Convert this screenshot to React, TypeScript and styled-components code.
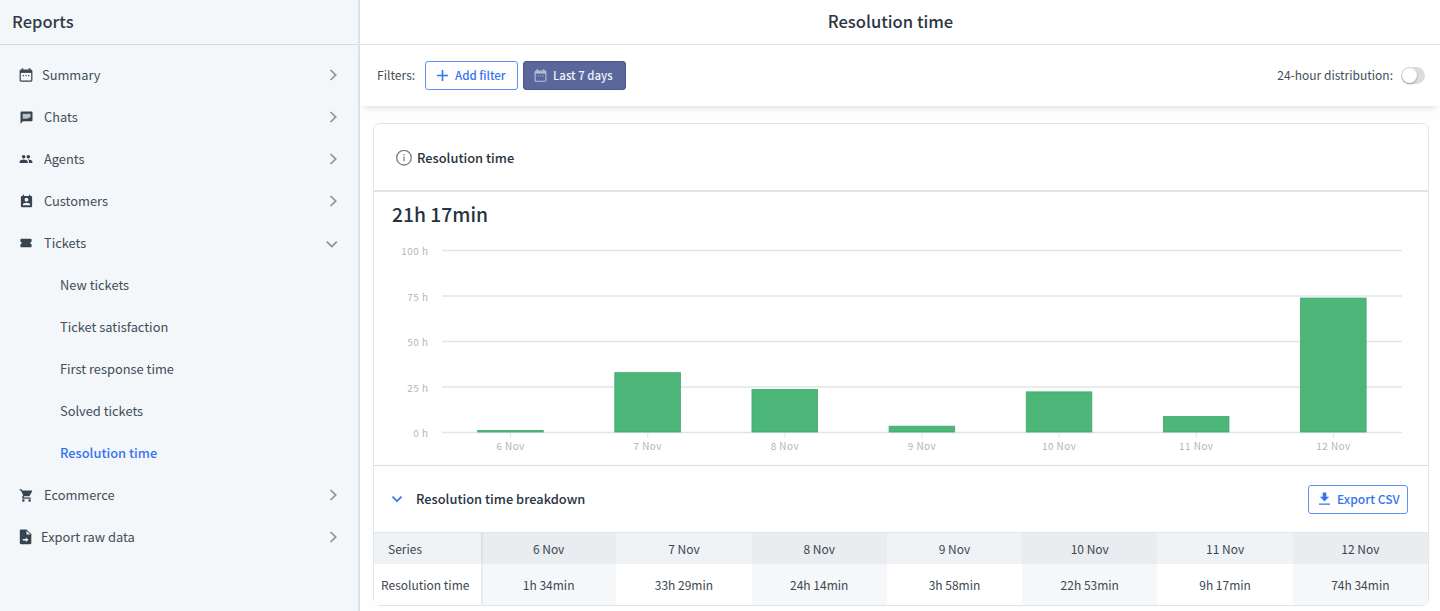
import React from "react";
import styled, { createGlobalStyle, css } from "styled-components";
import { MdPeople, MdPermContactCalendar, MdShoppingCart } from "react-icons/md";

const GlobalStyle = createGlobalStyle`
  *, *::before, *::after { box-sizing: border-box; }
  body {
    margin: 0;
    background: #fefefe;
    color: #424d57;
    font-family: "Noto Sans CJK SC", "Noto Sans", sans-serif;
    font-size: 12.85px;
    line-height: 20px;
  }
`;

const Page = styled.div`
  display: flex;
  height: 611px;
  overflow: hidden;
`;

/* Sidebar */

const Sidebar = styled.aside`
  flex: 0 0 360px;
  height: 611px;
  background: #f3f7fa;
  border-right: 2px solid #dce1e7;
`;

const SidebarHeader = styled.header`
  height: 45px;
  padding: 11px 12px 0;
  border-bottom: 1px solid #d3dae2;
  font-size: 16.5px;
  font-weight: 500;
  color: #2f3b47;
`;

const Menu = styled.nav`
  padding-top: 9px;
`;

const MenuRow = styled.a`
  display: flex;
  align-items: center;
  height: 42px;
  padding: 0 18px 0 17px;
`;

const MenuIcon = styled.span<{ $gap: number }>`
  display: flex;
  justify-content: center;
  width: 18px;
  margin-right: ${(p) => p.$gap}px;
  color: #37434f;
`;

const MenuLabel = styled.span`
  flex: 1;
  padding-bottom: 1px;
`;

const SubRow = styled.a<{ $active?: boolean }>`
  display: flex;
  align-items: center;
  height: 42px;
  padding-left: 60px;
  ${(p) =>
    p.$active &&
    css`
      color: #3574f0;
      font-weight: 500;
    `}
`;

/* Main column */

const Main = styled.main`
  flex: 1;
  min-width: 0;
  height: 611px;
`;

const TitleBar = styled.header`
  height: 45px;
  padding: 11px 19px 0 0;
  border-bottom: 1px solid #e2e6eb;
  background: #fff;
  text-align: center;
  font-size: 16.6px;
  font-weight: 500;
  color: #2a3643;
`;

const FilterBar = styled.div`
  display: flex;
  align-items: center;
  height: 61px;
  padding: 0 15px 1px 17px;
  background: #fff;
  box-shadow: 0 6px 7px -5px rgba(0, 0, 0, 0.16);
`;

const FilterLabel = styled.span`
  width: 48px;
  font-size: 12.1px;
`;

const Button = styled.button<{ $filled?: boolean; $width: number; $size?: number }>`
  display: flex;
  align-items: center;
  height: 29px;
  width: ${(p) => p.$width}px;
  padding: 0 0 0 10px;
  border: 1px solid #5c92fa;
  border-radius: 3px;
  background: #fff;
  color: #3574f0;
  font: 500 ${(p) => p.$size ?? 11.5}px/20px "Noto Sans CJK SC", sans-serif;
  white-space: nowrap;
  svg { flex: none; margin-right: 6px; }
  ${(p) =>
    p.$filled &&
    css`
      margin-left: 5px;
      border-color: #4a568f;
      background: #5a679d;
      color: #f1f3fa;
      svg { color: #b9bfd8; }
    `}
`;

const Distribution = styled.div`
  display: flex;
  align-items: center;
  gap: 8px;
  margin-left: auto;
  font-size: 12px;
`;

const Toggle = styled.span`
  display: flex;
  width: 24px;
  height: 17px;
  padding: 1px;
  border-radius: 9px;
  background: #dcdddf;
`;

const Knob = styled.span`
  width: 15px;
  height: 15px;
  border-radius: 50%;
  background: #fff;
  box-shadow: 0 1px 2px rgba(0, 0, 0, 0.35);
`;

const Card = styled.section`
  width: 1056px;
  height: 483px;
  margin: 17px 0 0 13px;
  border: 1px solid #e1e6ea;
  border-radius: 7px;
  background: #fff;
`;

const CardHeader = styled.header`
  display: flex;
  align-items: center;
  gap: 5px;
  height: 68px;
  padding: 1px 0 0 22px;
  border-bottom: 2px solid #dfe4ea;
  font-weight: 500;
  color: #27333f;
`;

const Total = styled.div`
  height: 45px;
  padding: 10px 0 0 18px;
  font-size: 19.3px;
  line-height: 24px;
  font-weight: 500;
  color: #27333f;
`;

const Chart = styled.svg`
  display: block;
  font-size: 9.9px;
  letter-spacing: 0.5px;
`;

const BreakdownHeader = styled.header`
  display: flex;
  align-items: center;
  height: 68px;
  padding: 0 20px 0 16px;
  border-top: 1px solid #d6dde4;
  border-bottom: 1px solid #e0e5e9;
`;

const BreakdownTitle = styled.h2`
  flex: 1;
  margin: 0 0 0 12px;
  font-size: 12.85px;
  font-weight: 500;
  color: #27333f;
`;

const Table = styled.div`
  display: grid;
  grid-template-columns: 107px repeat(7, 1fr);
  grid-template-rows: 31px 41px;
  font-size: 12px;
`;

const Cell = styled.div<{ $head?: boolean; $shade?: boolean; $first?: boolean }>`
  display: flex;
  align-items: center;
  justify-content: center;
  color: #3c4752;
  background: ${(p) => (p.$head ? (p.$shade ? "#e9edf0" : "#eff3f6") : p.$shade ? "#f5f7f9" : "#fff")};
  ${(p) =>
    p.$first &&
    css`
      justify-content: flex-start;
      padding-left: ${p.$head ? 14 : 7}px;
      position: relative;
      box-shadow: 1px 0 2px rgba(60, 80, 100, 0.13);
      clip-path: inset(0 -4px 0 0);
    `}
`;

const Chevron = ({ down, color = "#8b939b" }: { down?: boolean; color?: string }) => (
  <svg width="15" height="14" viewBox="0 0 15 14" fill="none" stroke={color} strokeWidth="1.7">
    {down ? <path d="M1.800 5.700 6.800 10.600 11.800 5.700" /> : <path d="M5.500 2 10.700 7 5.500 12" />}
  </svg>
);

const SmallChevron = () => (
  <svg width="14" height="14" viewBox="0 0 14 14" fill="none" stroke="#2f73f5" strokeWidth="1.7">
    <path d="M2.5 4.600 7 9 11.500 4.600" />
  </svg>
);

const CalendarIcon = ({ size = 14 }: { size?: number }) => (
  <svg width={size} height={size} viewBox="0 0 14 14" fill="none" stroke="currentColor">
    <rect x="1.200" y="2.200" width="11.600" height="11" rx="1" strokeWidth="1.200" />
    <path d="M1.200 3.600h11.600" strokeWidth="2.600" />
    <path d="M3.500.3v2M10.500.3v2" strokeWidth="1.500" />
    <path d="M3.700 7.600h1.200M6.400 7.600h1.200M9.100 7.600h1.200" strokeWidth="1.100" />
  </svg>
);

const ChatIcon = () => (
  <svg width="13" height="13" viewBox="0 0 13 13">
    <path d="M1.600.5h9.800c.6 0 1.100.5 1.100 1.100v7.600c0 .6-.5 1.100-1.100 1.100H3L.5 12.700V1.600C.5 1 1 .5 1.600.5z" fill="currentColor" />
    <path d="M2.700 2.700h7.800v3.700H8.100v1.300H2.700z" fill="#b3b8bd" />
    <path d="M3 4.400h7.200M3 6.100h7.200" stroke="#d5d9dd" strokeWidth=".6" />
  </svg>
);

const TicketIcon = () => (
  <svg width="12" height="10" viewBox="0 0 12 10" fill="currentColor">
    <path d="M1.3.7h9.4c.5 0 .9.4.9.9v2.200a1.200 1.200 0 0 0 0 2.400v2.200c0 .5-.4.9-.9.9H1.3a.9.9 0 0 1-.9-.9V6.200a1.200 1.200 0 0 0 0-2.400V1.600c0-.5.4-.9.9-.9z" />
  </svg>
);

const ExportFileIcon = () => (
  <svg width="14" height="16" viewBox="0 0 14 16">
    <path d="M2 .6h5.600L12.300 5.300v8.800c0 .7-.5 1.200-1.200 1.200H2c-.7 0-1.200-.5-1.200-1.200V1.800C.8 1.100 1.300.6 2 .6z" fill="currentColor" />
    <path d="M7.500 1.700V5.500h3.800z" fill="#f3f7fa" />
    <path d="M3.800 10h3V8.500l2.700 2.300-2.700 2.300v-1.500h-3z" fill="#f3f7fa" />
  </svg>
);

const InfoIcon = () => (
  <svg width="16" height="16" viewBox="0 0 16 16" fill="none" stroke="#77818b" strokeWidth="1.3">
    <circle cx="8" cy="7.700" r="7.300" />
    <path d="M8 6.800v4.500M8 4v1.500" />
  </svg>
);

const PlusIcon = () => (
  <svg width="13" height="13" viewBox="0 0 13 13" stroke="currentColor" strokeWidth="1.6">
    <path d="M6.500 1v11M1 6.500h11" />
  </svg>
);

const DownloadIcon = () => (
  <svg width="12" height="14" viewBox="0 0 12 14" fill="currentColor">
    <path d="M3.700.5h3.600v4.300h2.800L5.500 9.500.900 4.800h2.800zM0 11.500h11v1.300H0z" />
  </svg>
);

type Item = { label: string; icon: React.ReactNode; gap: number; open?: boolean };

const topItems: Item[] = [
  { label: "Summary", icon: <CalendarIcon />, gap: 7 },
  { label: "Chats", icon: <ChatIcon />, gap: 9 },
  { label: "Agents", icon: <MdPeople size={14} />, gap: 9 },
  { label: "Customers", icon: <MdPermContactCalendar size={15} />, gap: 9 },
  { label: "Tickets", icon: <TicketIcon />, gap: 9, open: true },
];

const ticketItems = ["New tickets", "Ticket satisfaction", "First response time", "Solved tickets", "Resolution time"];

const bottomItems: Item[] = [
  { label: "Ecommerce", icon: <MdShoppingCart size={15} />, gap: 9 },
  { label: "Export raw data", icon: <ExportFileIcon />, gap: 6 },
];

const MenuItem = ({ item }: { item: Item }) => (
  <MenuRow>
    <MenuIcon $gap={item.gap}>{item.icon}</MenuIcon>
    <MenuLabel>{item.label}</MenuLabel>
    <Chevron down={item.open} />
  </MenuRow>
);

const series = [
  { day: "6 Nov", text: "1h 34min", hours: 1.57 },
  { day: "7 Nov", text: "33h 29min", hours: 33.48 },
  { day: "8 Nov", text: "24h 14min", hours: 24.23 },
  { day: "9 Nov", text: "3h 58min", hours: 3.97 },
  { day: "10 Nov", text: "22h 53min", hours: 22.88 },
  { day: "11 Nov", text: "9h 17min", hours: 9.28 },
  { day: "12 Nov", text: "74h 34min", hours: 74.57 },
];

const LEFT = 68;
const RIGHT = 1028;
const BASE = 195.5;
const SCALE = 1.82;
const STEP = (RIGHT - LEFT) / series.length;

const BarChart = () => (
  <Chart width="1054" height="228" viewBox="0 0 1054 228">
    {[0, 25, 50, 75, 100].map((v) => {
      const y = BASE - v * SCALE;
      return (
        <g key={v}>
          <line x1={LEFT} x2={RIGHT} y1={y} y2={y} stroke="#e3e4e5" strokeWidth="1.3" />
          <text x="54.500" y={y + 4.500} textAnchor="end" fill="#b3b6b9">{v} h</text>
        </g>
      );
    })}
    {series.map((s, i) => {
      const x = LEFT + STEP * (i + 0.5);
      const top = BASE - s.hours * 1.815 + 0.9;
      return (
        <g key={s.day}>
          <rect x={x - 32.9} y={top} width="65.6" height={BASE - 0.5 - top} fill="#4db679" stroke="#3dab6b" strokeWidth="0.8" />
          <line x1={x} x2={x} y1={BASE + 0.5} y2={BASE + 5} stroke="#dfe1e3" />
          <text x={x} y={BASE + 17.5} textAnchor="middle" fill="#b0b3b6">{s.day}</text>
        </g>
      );
    })}
  </Chart>
);

export default function App() {
  return (
    <>
      <GlobalStyle />
      <Page>
        <Sidebar>
          <SidebarHeader>Reports</SidebarHeader>
          <Menu>
            {topItems.map((item) => <MenuItem key={item.label} item={item} />)}
            {ticketItems.map((label) => (
              <SubRow key={label} $active={label === "Resolution time"}>{label}</SubRow>
            ))}
            {bottomItems.map((item) => <MenuItem key={item.label} item={item} />)}
          </Menu>
        </Sidebar>
        <Main>
          <TitleBar>Resolution time</TitleBar>
          <FilterBar>
            <FilterLabel>Filters:</FilterLabel>
            <Button $width={93}><PlusIcon />Add filter</Button>
            <Button $filled $width={103} $size={11.4}><CalendarIcon size={13} />Last 7 days</Button>
            <Distribution>
              24-hour distribution:
              <Toggle><Knob /></Toggle>
            </Distribution>
          </FilterBar>
          <Card>
            <CardHeader><InfoIcon />Resolution time</CardHeader>
            <Total>21h 17min</Total>
            <BarChart />
            <BreakdownHeader>
              <SmallChevron />
              <BreakdownTitle>Resolution time breakdown</BreakdownTitle>
              <Button $width={100} $size={12.1}><DownloadIcon />Export CSV</Button>
            </BreakdownHeader>
            <Table>
              <Cell $head $first>Series</Cell>
              {series.map((s, i) => <Cell key={s.day} $head $shade={i % 2 === 0}>{s.day}</Cell>)}
              <Cell $first>Resolution time</Cell>
              {series.map((s, i) => <Cell key={s.day} $shade={i % 2 === 0}>{s.text}</Cell>)}
            </Table>
          </Card>
        </Main>
      </Page>
    </>
  );
}
